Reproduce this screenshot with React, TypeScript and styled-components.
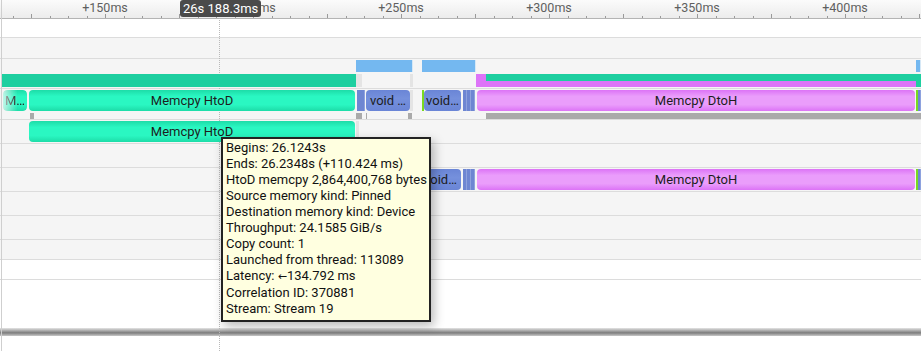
import React from 'react'
import styled, { createGlobalStyle, css } from 'styled-components'

const GlobalStyle = createGlobalStyle`
  html, body {
    margin: 0;
    padding: 0;
    background: #ffffff;
  }
  body {
    font-family: Roboto, "Liberation Sans", Arial, sans-serif;
  }
`

type Kind = 'htod' | 'dtoh' | 'kernel' | 'api' | 'runtime' | 'stack' | 'lilac' | 'gap' | 'pale' | 'lime' | 'red'

interface Bar {
  x: number
  w: number
  kind: Kind
  label?: string
  fade?: boolean
}

const Page = styled.div`
  position: relative;
  width: 921px;
  height: 351px;
  overflow: hidden;
  background: #ffffff;

  &::after {
    content: "";
    position: absolute;
    left: 1px;
    top: 0;
    bottom: 0;
    width: 1px;
    background: #cfcfcf;
    z-index: 3;
  }
`

const Ruler = styled.div`
  position: relative;
  height: 18px;
  display: flex;
  padding-left: 31px;
  background: linear-gradient(#fbfbfb, #ececec);
  border-bottom: 1px solid #b4b4b4;
`

// one 50ms step of the ruler, label centred on its major tick
const RulerCell = styled.span`
  flex: 0 0 148px;
  text-align: center;
  padding-top: 1px;
  font-size: 12.5px;
  line-height: 14px;
  color: #5f5f5f;
  white-space: nowrap;
`

const Ticks = styled.svg`
  position: absolute;
  left: 0;
  bottom: 0;
`

const Cursor = styled.div`
  position: absolute;
  left: 180px;
  top: 0;
  height: 17px;
  padding: 0 3px;
  border-radius: 3px;
  background: #4a4a4a;
  color: #ffffff;
  font-size: 13px;
  line-height: 17px;
  white-space: nowrap;
  z-index: 4;
`

const CursorLine = styled.div`
  position: absolute;
  left: 219px;
  top: 18px;
  bottom: 0;
  width: 0;
  border-left: 1px dotted #b9b9b9;
  z-index: 1;
`

const Track = styled.div<{ $h: number; $white?: boolean; $pad?: number }>`
  display: flex;
  flex-direction: column;
  gap: 2px;
  box-sizing: border-box;
  height: ${(p) => p.$h + 1}px;
  padding-top: ${(p) => p.$pad ?? 0}px;
  background: ${(p) => (p.$white ? '#ffffff' : '#f5f5f5')};
  border-bottom: 1px solid #dcdcdc;
`

const Lane = styled.div<{ $h: number }>`
  position: relative;
  flex: 0 0 ${(p) => p.$h}px;
  height: ${(p) => p.$h}px;
`

const Filler = styled.div`
  height: 48px;
  background: #ffffff;
`

const Splitter = styled.div`
  height: 8px;
  background: linear-gradient(#e4e4e4, #a8a8a8 35%, #7d7d7d 60%, #c9c9c9);
`

const kindStyles: Record<Kind, ReturnType<typeof css>> = {
  htod: css`
    background: linear-gradient(#1ddca8, #2af7c2 30%, #2af7c2 70%, #1ddca8);
    border-radius: 4px;
  `,
  dtoh: css`
    background: linear-gradient(#dc73f6, #ea9dfb 30%, #ea9dfb 70%, #dc73f6);
    border-radius: 4px;
  `,
  kernel: css`
    background: linear-gradient(#6a85d6, #7590dc 40%, #6a85d6);
    border-radius: 4px;
  `,
  api: css`
    background: #6e86d2;
    box-shadow: inset -1px 0 0 #8ea2de;
  `,
  runtime: css`
    background: #74b8f0;
    box-shadow: inset -1px 0 0 #d6e8f6;
  `,
  stack: css`
    background: #1ecfa0;
  `,
  lilac: css`
    background: #dd74f8;
  `,
  gap: css`
    background: #aaaaaa;
  `,
  pale: css`
    background: #e4e4e4;
  `,
  lime: css`
    background: #7ad91f;
  `,
  red: css`
    background: #e35454;
  `,
}

const BarBox = styled.div<{ $kind: Kind; $fade?: boolean }>`
  position: absolute;
  top: 0;
  bottom: 0;
  z-index: 2;
  overflow: hidden;
  display: flex;
  align-items: center;
  justify-content: center;
  font-size: 13px;
  color: #1d1d1d;
  white-space: nowrap;
  ${(p) => kindStyles[p.$kind]}
  ${(p) =>
    p.$fade &&
    css`
      -webkit-mask-image: linear-gradient(90deg, rgba(0, 0, 0, 0.25), #000 60%);
      mask-image: linear-gradient(90deg, rgba(0, 0, 0, 0.25), #000 60%);
    `}
`

const Tip = styled.div`
  position: absolute;
  left: 221px;
  top: 137px;
  width: 202px;
  padding: 1px 1px 3px 3px;
  background: #ffffe0;
  border: 2px solid #222222;
  box-shadow: 3px 4px 10px rgba(0, 0, 0, 0.28);
  font-size: 13px;
  line-height: 16px;
  color: #111111;
  white-space: nowrap;
  z-index: 5;
`

const TipLine = styled.div``

const Arrow = styled.span`
  font-family: "DejaVu Sans", sans-serif;
  font-size: 11px;
`

const Bars = ({ bars }: { bars: Bar[] }) => (
  <>
    {bars.map((b, i) => (
      <BarBox key={i} $kind={b.kind} $fade={b.fade} style={{ left: b.x, width: b.w }}>
        {b.label}
      </BarBox>
    ))}
  </>
)

const labels = [150, 200, 250, 300, 350, 400]

const runtimeRow: Bar[] = [
  { x: 356, w: 57, kind: 'runtime' },
  { x: 422, w: 54, kind: 'runtime' },
  { x: 916, w: 5, kind: 'runtime' },
]

const stackRow: Bar[] = [
  { x: 2, w: 354, kind: 'stack' },
  { x: 356, w: 6, kind: 'pale' },
  { x: 410, w: 3, kind: 'pale' },
  { x: 476, w: 440, kind: 'lilac' },
  { x: 916, w: 5, kind: 'stack' },
]

// thin top half of the stack row, over the lilac band
const stackTopRow: Bar[] = [{ x: 486, w: 435, kind: 'stack' }]

const markRow: Bar[] = [
  { x: 30, w: 2, kind: 'red' },
  { x: 357, w: 4, kind: 'red' },
  { x: 366, w: 1, kind: 'lime' },
  { x: 409, w: 4, kind: 'red' },
  { x: 422, w: 1, kind: 'lime' },
  { x: 474, w: 2, kind: 'red' },
]

const kernelRow: Bar[] = [
  { x: 3, w: 24, kind: 'htod', label: 'M…', fade: true },
  { x: 29, w: 326, kind: 'htod', label: 'Memcpy HtoD' },
  { x: 357, w: 8, kind: 'api' },
  { x: 366, w: 44, kind: 'kernel', label: 'void …' },
  { x: 410, w: 3, kind: 'pale' },
  { x: 422, w: 2, kind: 'lime' },
  { x: 424, w: 37, kind: 'kernel', label: 'void…' },
  { x: 463, w: 4, kind: 'api' },
  { x: 467, w: 4, kind: 'api' },
  { x: 471, w: 4, kind: 'api' },
  { x: 477, w: 438, kind: 'dtoh', label: 'Memcpy DtoH' },
  { x: 916, w: 2, kind: 'lime' },
  { x: 918, w: 3, kind: 'api' },
]

const gapRow: Bar[] = [
  { x: 30, w: 4, kind: 'gap' },
  { x: 356, w: 6, kind: 'gap' },
  { x: 366, w: 1, kind: 'gap' },
  { x: 408, w: 4, kind: 'gap' },
  { x: 486, w: 435, kind: 'gap' },
]

const copyRow: Bar[] = [
  { x: 29, w: 326, kind: 'htod', label: 'Memcpy HtoD' },
  { x: 356, w: 3, kind: 'pale' },
]

const streamRow: Bar[] = [
  { x: 420, w: 41, kind: 'kernel', label: 'void…' },
  { x: 463, w: 4, kind: 'api' },
  { x: 467, w: 4, kind: 'api' },
  { x: 471, w: 4, kind: 'api' },
  { x: 477, w: 438, kind: 'dtoh', label: 'Memcpy DtoH' },
  { x: 916, w: 2, kind: 'lime' },
  { x: 918, w: 3, kind: 'api' },
]

const tipLines: React.ReactNode[] = [
  'Begins: 26.1243s',
  'Ends: 26.2348s (+110.424 ms)',
  'HtoD memcpy 2,864,400,768 bytes',
  'Source memory kind: Pinned',
  'Destination memory kind: Device',
  'Throughput: 24.1585 GiB/s',
  'Copy count: 1',
  'Launched from thread: 113089',
  <>
    Latency: <Arrow>{'\u2190'}</Arrow>134.792 ms
  </>,
  'Correlation ID: 370881',
  'Stream: Stream 19',
]

const RulerTicks = () => {
  const ticks: number[] = []
  for (let x = 105 - 18.5 * 5; x < 921; x += 18.5) ticks.push(x)
  return (
    <Ticks width={921} height={6}>
      {ticks.map((x, i) => {
        const major = Math.abs(((x - 105) / 74) % 1) < 0.01
        return (
          <line
            key={i}
            x1={Math.round(x) + 0.5}
            x2={Math.round(x) + 0.5}
            y1={major ? 2 : 4}
            y2={6}
            stroke="#9a9a9a"
            strokeWidth={1}
          />
        )
      })}
    </Ticks>
  )
}

export default function App() {
  return (
    <>
      <GlobalStyle />
      <Page>
        <Ruler>
          <RulerTicks />
          {labels.map((ms) => (
            <RulerCell key={ms}>+{ms}ms</RulerCell>
          ))}
        </Ruler>
        <Cursor>26s 188.3ms</Cursor>
        <CursorLine />

        <Track $h={18} $white />
        <Track $h={20} />
        <Track $h={29} $pad={1}>
          <Lane $h={12}>
            <Bars bars={runtimeRow} />
          </Lane>
          <Lane $h={13}>
            <Bars bars={stackRow} />
            <Lane $h={7}>
              <Bars bars={stackTopRow} />
            </Lane>
          </Lane>
        </Track>
        <Track $h={30} $pad={1}>
          <Lane $h={21}>
            <Bars bars={kernelRow} />
          </Lane>
          <Lane $h={6}>
            <Bars bars={gapRow} />
          </Lane>
        </Track>
        <Track $h={23} $pad={1}>
          <Lane $h={21}>
            <Bars bars={copyRow} />
          </Lane>
        </Track>
        <Track $h={23} />
        <Track $h={23} $pad={1}>
          <Lane $h={21}>
            <Bars bars={streamRow} />
          </Lane>
        </Track>
        <Track $h={23} />
        <Track $h={23} />
        <Track $h={19} />
        <Track $h={19} $white />
        <Filler />
        <Splitter />

        <Tip>
          {tipLines.map((t, i) => (
            <TipLine key={i}>{t}</TipLine>
          ))}
        </Tip>
      </Page>
    </>
  )
}
